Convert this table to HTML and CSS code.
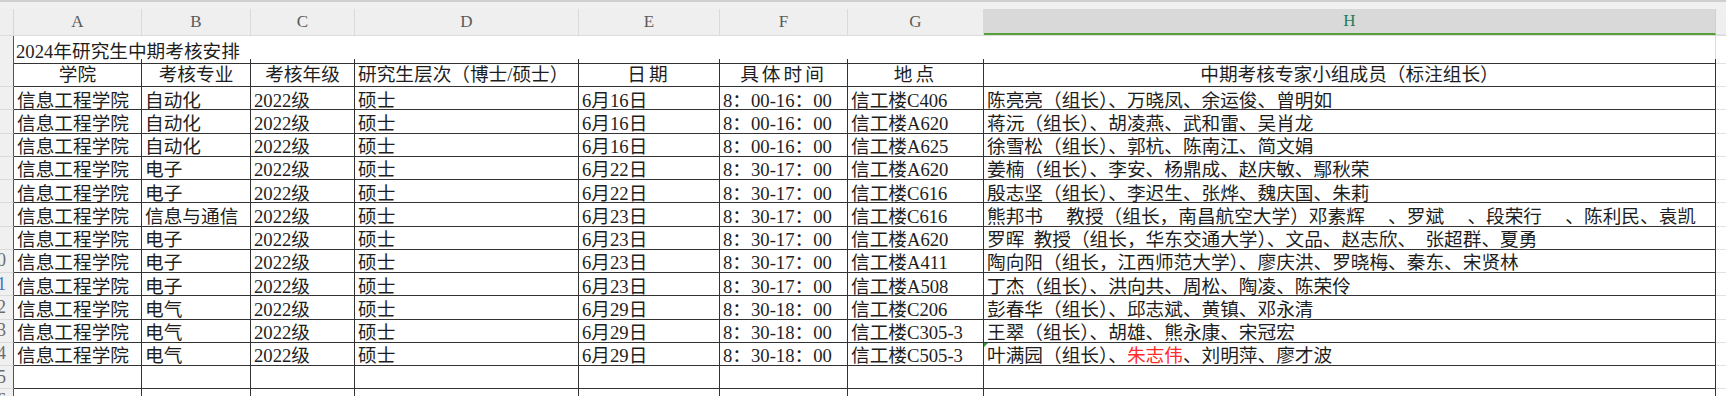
FILE: index.html
```html
<!DOCTYPE html>
<html lang="zh-CN">
<head>
<meta charset="utf-8">
<title>2024年研究生中期考核安排</title>
<link rel="stylesheet" href="styles.css">
</head>
<body>
<div class="top"></div>
<div class="row colhead">
  <div class="corner"></div>
  <div class="ch">A</div>
  <div class="ch">B</div>
  <div class="ch">C</div>
  <div class="ch">D</div>
  <div class="ch">E</div>
  <div class="ch">F</div>
  <div class="ch">G</div>
  <div class="ch sel">H</div>
  <div class="ch rest"></div>
</div>
<div class="row title">
  <div class="rh"></div>
  <div class="title-cell">2024年研究生中期考核安排</div>
  <div class="rest"></div>
</div>
<div class="row head">
  <div class="rh"></div>
  <div class="c ctr">学院</div>
  <div class="c ctr">考核专业</div>
  <div class="c ctr">考核年级</div>
  <div class="c">研究生层次（博士/硕士）</div>
  <div class="c ctr sp">日期</div>
  <div class="c ctr sp">具体时间</div>
  <div class="c ctr sp">地点</div>
  <div class="c ctr">中期考核专家小组成员（标注组长）</div>
  <div class="rest"></div>
</div>
<div class="row data">
  <div class="rh"></div>
  <div class="c">信息工程学院</div><div class="c">自动化</div><div class="c">2022级</div><div class="c">硕士</div><div class="c">6月16日</div><div class="c">8：00-16：00</div><div class="c">信工楼C406</div>
  <div class="c">陈亮亮（组长）、万晓凤、余运俊、曾明如</div><div class="rest"></div>
</div>
<div class="row data">
  <div class="rh"></div>
  <div class="c">信息工程学院</div><div class="c">自动化</div><div class="c">2022级</div><div class="c">硕士</div><div class="c">6月16日</div><div class="c">8：00-16：00</div><div class="c">信工楼A620</div>
  <div class="c">蒋沅（组长）、胡凌燕、武和雷、吴肖龙</div><div class="rest"></div>
</div>
<div class="row data">
  <div class="rh"></div>
  <div class="c">信息工程学院</div><div class="c">自动化</div><div class="c">2022级</div><div class="c">硕士</div><div class="c">6月16日</div><div class="c">8：00-16：00</div><div class="c">信工楼A625</div>
  <div class="c">徐雪松（组长）、郭杭、陈南江、简文娟</div><div class="rest"></div>
</div>
<div class="row data">
  <div class="rh"></div>
  <div class="c">信息工程学院</div><div class="c">电子</div><div class="c">2022级</div><div class="c">硕士</div><div class="c">6月22日</div><div class="c">8：30-17：00</div><div class="c">信工楼A620</div>
  <div class="c">姜楠（组长）、李安、杨鼎成、赵庆敏、鄢秋荣</div><div class="rest"></div>
</div>
<div class="row data">
  <div class="rh"></div>
  <div class="c">信息工程学院</div><div class="c">电子</div><div class="c">2022级</div><div class="c">硕士</div><div class="c">6月22日</div><div class="c">8：30-17：00</div><div class="c">信工楼C616</div>
  <div class="c">殷志坚（组长）、李迟生、张烨、魏庆国、朱莉</div><div class="rest"></div>
</div>
<div class="row data">
  <div class="rh"></div>
  <div class="c">信息工程学院</div><div class="c">信息与通信</div><div class="c">2022级</div><div class="c">硕士</div><div class="c">6月23日</div><div class="c">8：30-17：00</div><div class="c">信工楼C616</div>
  <div class="c">熊邦书　 教授（组长，南昌航空大学）邓素辉　 、罗斌　 、段荣行　 、陈利民、袁凯</div><div class="rest"></div>
</div>
<div class="row data">
  <div class="rh"></div>
  <div class="c">信息工程学院</div><div class="c">电子</div><div class="c">2022级</div><div class="c">硕士</div><div class="c">6月23日</div><div class="c">8：30-17：00</div><div class="c">信工楼A620</div>
  <div class="c">罗晖  教授（组长，华东交通大学）、文品、赵志欣、　张超群、夏勇</div><div class="rest"></div>
</div>
<div class="row data">
  <div class="rh"><span>10</span></div>
  <div class="c">信息工程学院</div><div class="c">电子</div><div class="c">2022级</div><div class="c">硕士</div><div class="c">6月23日</div><div class="c">8：30-17：00</div><div class="c">信工楼A411</div>
  <div class="c">陶向阳（组长，江西师范大学）、廖庆洪、罗晓梅、秦东、宋贤林</div><div class="rest"></div>
</div>
<div class="row data">
  <div class="rh"><span class="blue">11</span></div>
  <div class="c">信息工程学院</div><div class="c">电子</div><div class="c">2022级</div><div class="c">硕士</div><div class="c">6月23日</div><div class="c">8：30-17：00</div><div class="c">信工楼A508</div>
  <div class="c">丁杰（组长）、洪向共、周松、陶凌、陈荣伶</div><div class="rest"></div>
</div>
<div class="row data">
  <div class="rh"><span>12</span></div>
  <div class="c">信息工程学院</div><div class="c">电气</div><div class="c">2022级</div><div class="c">硕士</div><div class="c">6月29日</div><div class="c">8：30-18：00</div><div class="c">信工楼C206</div>
  <div class="c">彭春华（组长）、邱志斌、黄镇、邓永清</div><div class="rest"></div>
</div>
<div class="row data">
  <div class="rh"><span>13</span></div>
  <div class="c">信息工程学院</div><div class="c">电气</div><div class="c">2022级</div><div class="c">硕士</div><div class="c">6月29日</div><div class="c">8：30-18：00</div><div class="c">信工楼C305-3</div>
  <div class="c">王翠（组长）、胡雄、熊永康、宋冠宏</div><div class="rest"></div>
</div>
<div class="row data">
  <div class="rh"><span>14</span></div>
  <div class="c">信息工程学院</div><div class="c">电气</div><div class="c">2022级</div><div class="c">硕士</div><div class="c">6月29日</div><div class="c">8：30-18：00</div><div class="c">信工楼C505-3</div>
  <div class="c mark">叶满园（组长）、<span class="red">朱志伟</span>、刘明萍、廖才波</div><div class="rest"></div>
</div>
<div class="row data">
  <div class="rh"><span>15</span></div>
  <div class="c"></div><div class="c"></div><div class="c"></div><div class="c"></div><div class="c"></div><div class="c"></div><div class="c"></div><div class="c"></div><div class="rest"></div>
</div>
<div class="row data">
  <div class="rh"><span>16</span></div>
  <div class="c"></div><div class="c"></div><div class="c"></div><div class="c"></div><div class="c"></div><div class="c"></div><div class="c"></div><div class="c"></div><div class="rest"></div>
</div>
</body>
</html>
```

FILE: styles.css
```css
html, body {
  margin: 0;
  padding: 0;
  background: #ffffff;
  overflow: hidden;
}
body {
  width: 1726px;
  height: 396px;
  font-family: "Liberation Serif", "Noto Sans CJK SC", serif;
  font-size: 18.67px;
  color: #1e1e1e;
}
.top {
  height: 7px;
  background: #f0f0f0;
  border-top: 2px solid #cfcfcf;
}
.row {
  display: grid;
  grid-template-columns: 14px 128px 109px 104px 224px 141px 128px 136px 732px 1fr;
}
.colhead {
  height: 26px;
  background: #efefef;
  border-bottom: 1px solid #dcdcdc;
}
.corner {
  background: #efefef;
  border-right: 1px solid #d6d6d6;
}
.ch {
  display: flex;
  align-items: center;
  justify-content: center;
  border-right: 1px solid #dadada;
  color: #5a5a5a;
  font-size: 17px;
}
.ch.sel {
  background: #d9d9d9;
  color: #1f7d55;
  border-bottom: 2px solid #55a03c;
  border-right-color: #cfcfcf;
}
.ch.rest {
  border-right: none;
}
.rh {
  display: flex;
  align-items: center;
  justify-content: flex-end;
  overflow: hidden;
  white-space: nowrap;
  padding-right: 7px;
  background: #f0f0f0;
  border-right: 1px solid #555555;
  border-bottom: 1px solid #dadada;
  color: #6b6b6b;
  font-size: 18px;
  font-family: "Liberation Serif", serif;
}
.rh .blue {
  color: #3d72c4;
}
.title {
  height: 23px;
}
.title-cell {
  grid-column: 2 / 10;
  display: flex;
  align-items: center;
  padding-left: 2px;
  white-space: pre;
  border-right: 1px solid #dadada;
  border-bottom: 1px solid #333333;
}
.rest {
  border-bottom: 1px solid #e2e2e2;
}
.head {
  height: 28px;
}
.data {
  height: 23.25px;
}
.c {
  display: flex;
  align-items: center;
  padding-left: 3px;
  white-space: pre;
  overflow: hidden;
  border-right: 1px solid #333333;
  border-bottom: 1px solid #333333;
}
.c.ctr {
  justify-content: center;
  padding-left: 0;
}
.c.sp {
  letter-spacing: 3px;
}
.red {
  color: #ff2a2a;
}
.mark {
  position: relative;
}
.mark::before {
  content: "";
  position: absolute;
  left: 0;
  top: 0;
  border-top: 4px solid #2f9a3c;
  border-right: 4px solid transparent;
}
```
